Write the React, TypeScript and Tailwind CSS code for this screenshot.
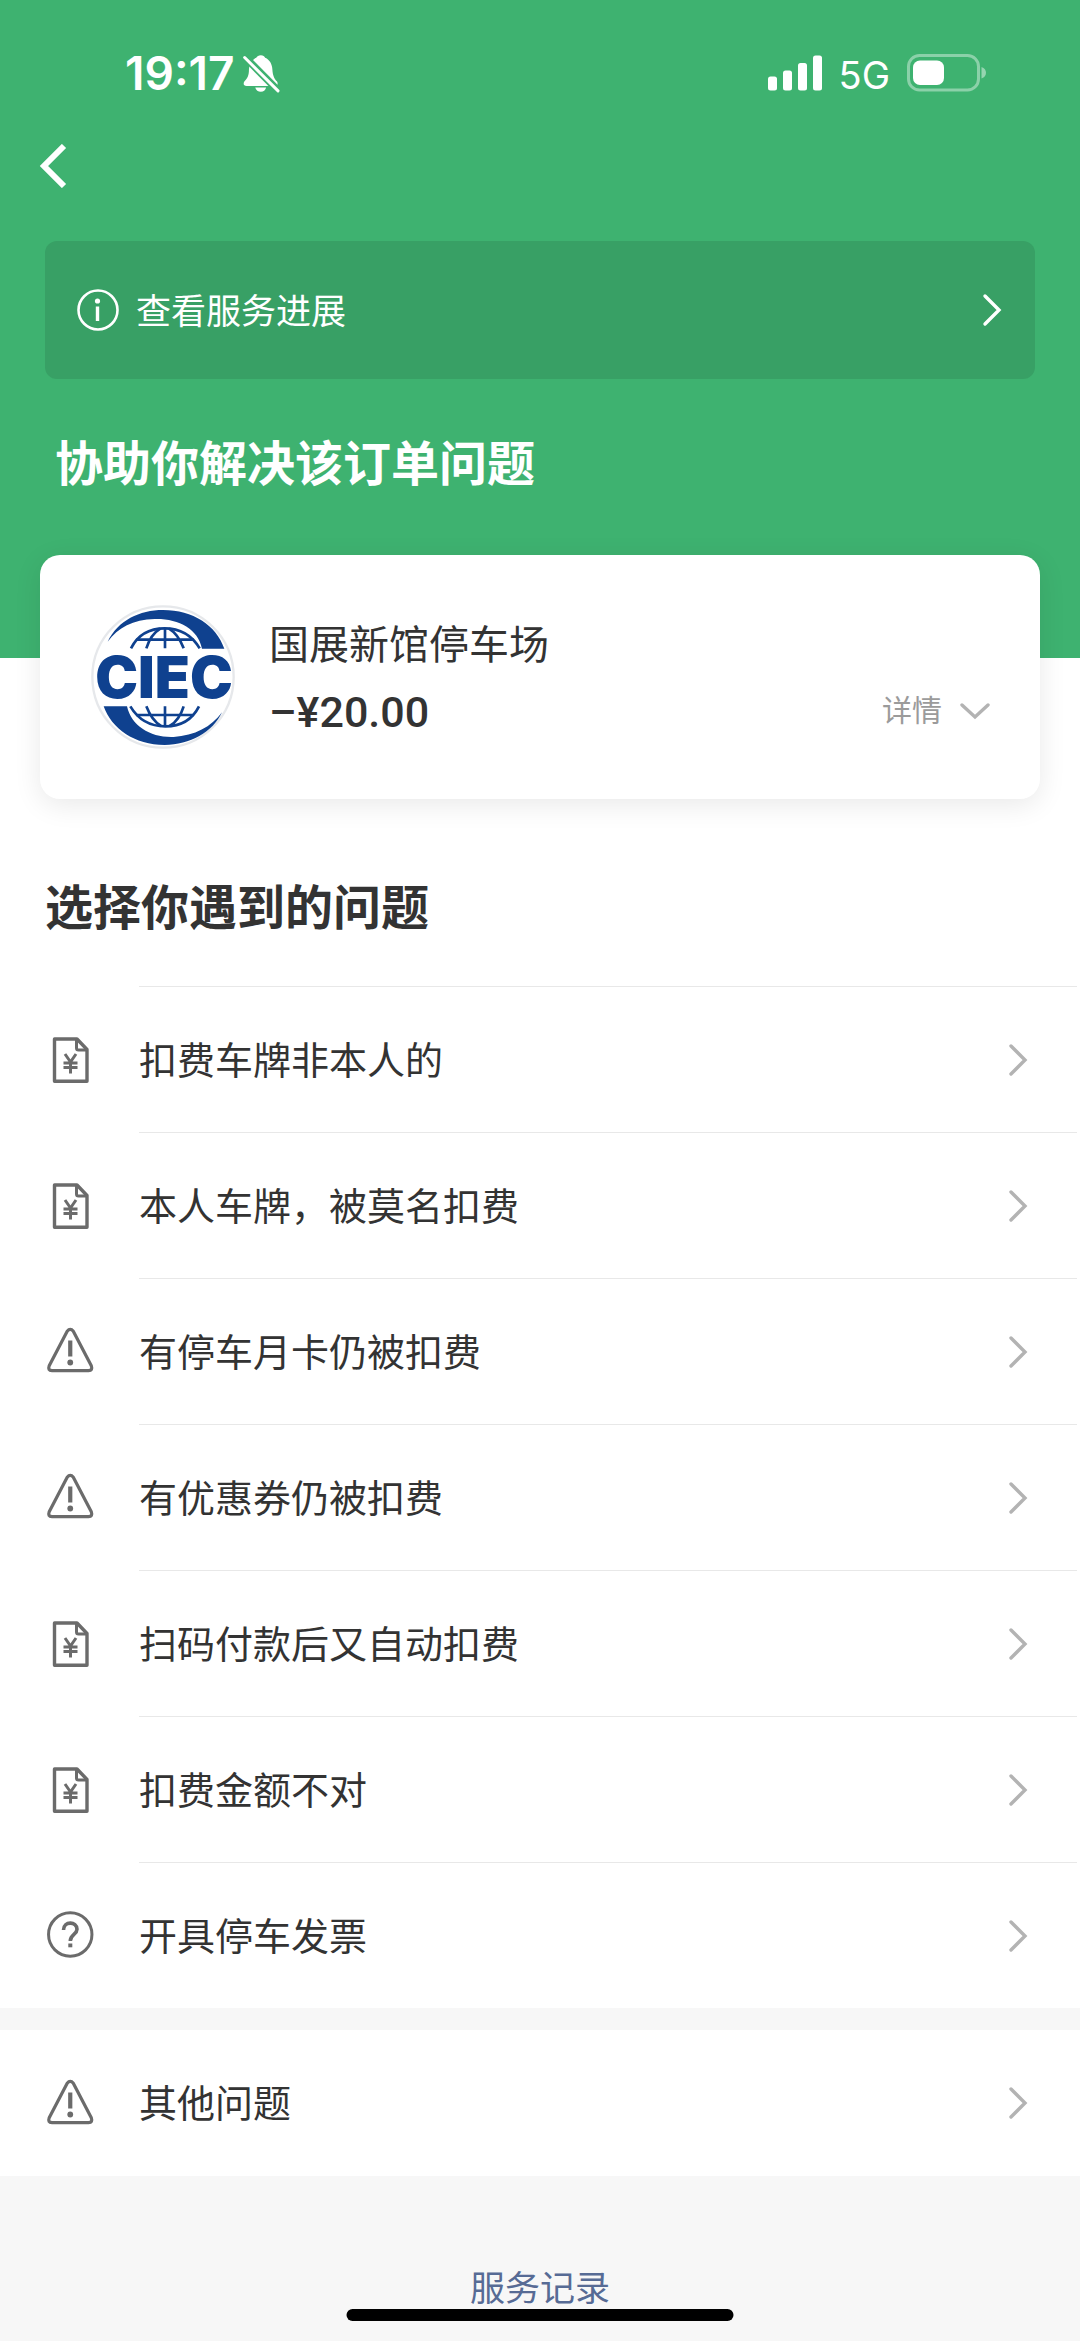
import type { ReactNode } from "react";

type IconName = "bill" | "warning" | "question";

const ISSUES: { label: string; icon: IconName }[] = [
  { label: "扣费车牌非本人的", icon: "bill" },
  { label: "本人车牌，被莫名扣费", icon: "bill" },
  { label: "有停车月卡仍被扣费", icon: "warning" },
  { label: "有优惠券仍被扣费", icon: "warning" },
  { label: "扫码付款后又自动扣费", icon: "bill" },
  { label: "扣费金额不对", icon: "bill" },
  { label: "开具停车发票", icon: "question" },
];

function BillIcon() {
  return (
    <svg viewBox="0 0 48 48" className="size-12" fill="none" stroke="#6b6b6b" strokeWidth="3.4" strokeLinejoin="round">
      <path d="M8.500 4h22.500L41 14.500V46.300H8.500z" />
      <path d="M30.500 4.500v8.500q0 2 2 2h8.500" strokeWidth="3" />
      <path d="M19 19l5.500 8 5.500-8M17.500 28h14M17.500 32.500h14M24.500 27V38.500" strokeWidth="3" />
    </svg>
  );
}

function WarningIcon() {
  return (
    <svg viewBox="0 0 48 48" className="size-12" fill="none" stroke="#6b6b6b" strokeWidth="3.200" strokeLinejoin="round">
      <path d="M21.200 4.200L3.200 38.700Q1.500 43.500 6 43.700H42.500Q47 43.500 45.300 38.700L27.300 4.200Q24.250 0.400 21.200 4.200Z" />
      <path d="M24.250 13.500v16" strokeWidth="4.200" />
      <circle cx="24.250" cy="35.500" r="2.900" fill="#6b6b6b" stroke="none" />
    </svg>
  );
}

function QuestionIcon() {
  return (
    <svg viewBox="0 0 48 48" className="size-12" fill="none" stroke="#6b6b6b" strokeWidth="3">
      <circle cx="24.250" cy="23.500" r="21.700" />
      <path d="M17.500 19C17.500 10 31 10 31 18.300C31 23.500 24.300 23.500 24.300 30" strokeWidth="3.600" />
      <rect x="22.300" y="32.500" width="4" height="3.800" fill="#6b6b6b" stroke="none" />
    </svg>
  );
}

const ICONS: Record<IconName, ReactNode> = {
  bill: <BillIcon />,
  warning: <WarningIcon />,
  question: <QuestionIcon />,
};

function ChevronRight({ className }: { className: string }) {
  return (
    <svg viewBox="0 0 20 34" className={`h-[34px] w-5 ${className}`} fill="none" stroke="currentColor" strokeWidth="3.4" strokeLinecap="round">
      <path d="M3 3l14 14L3 31" />
    </svg>
  );
}

function StatusBar() {
  return (
    <div className="flex h-[146px] items-center justify-between pl-[125px] pr-[93px] font-['Inter',sans-serif]">
      <div className="flex items-center gap-2">
        <span className="text-[46px] leading-none font-semibold">19:17</span>
        <svg viewBox="22 24 112 117" className="h-[39px] w-[37px]" fill="currentColor">
          <path d="M76 27c7 0 11 3 13 8 14 6 21 19 22 36 1 17 5 26 14 36 4 8 1 13-7 13H33c-9 0-11-6-7-13 10-11 14-19 14-36 1-17 8-30 22-36 3-5 7-8 14-8z" />
          <path d="M59 125h33c-2 8-8 13-16 13s-15-5-17-13z" />
          <path d="M30 35l97 98" stroke="#3eb270" strokeWidth="22" />
          <path d="M27 34l101 101" stroke="currentColor" strokeWidth="9" strokeLinecap="round" />
        </svg>
      </div>
      <div className="flex items-center gap-[17px]">
        <svg viewBox="0 0 54 36" className="h-9 w-[54px]" fill="currentColor">
          <rect x="0" y="21.500" width="9" height="14" rx="2.500" />
          <rect x="15" y="15.500" width="9" height="20" rx="2.500" />
          <rect x="30" y="8" width="9" height="27.500" rx="2.500" />
          <rect x="45" y="0.500" width="9" height="35" rx="2.500" />
        </svg>
        <span className="pt-1 text-[38px] leading-none">5G</span>
        <svg viewBox="0 0 80 38" className="h-[38px] w-20" fill="none">
          <rect x="1.500" y="1.500" width="70" height="34.500" rx="11" stroke="#fff" strokeOpacity="0.4" strokeWidth="3" />
          <rect x="6" y="6.500" width="31" height="24.500" rx="7" fill="#fff" />
          <path d="M74.500 13c6 2 6 9.500 0 11.500z" fill="#fff" fillOpacity="0.45" />
        </svg>
      </div>
    </div>
  );
}

function Globe() {
  return (
    <g fill="none" stroke="#0f418f" strokeWidth="8">
      <path d="M144 154C165 112 200 94 245 94S325 112 350 154" />
      <path d="M160 128H332M246 94V154M232 95C210 108 198 128 190 154M258 95C280 108 292 128 302 154" />
    </g>
  );
}

function MerchantLogo() {
  return (
    <svg viewBox="24 24 432 432" className="size-36 shrink-0" role="img" aria-label="CIEC">
      <circle cx="240" cy="240" r="212" fill="#fff" stroke="#e6e8eb" strokeWidth="7" />
      <path d="M74 134C105 70 170 39 240 39C330 39 400 85 424 155H357C345 95 285 64 215 66C150 68 105 92 74 134Z" fill="#0f418f" />
      <path d="M417 346C390 405 320 444 245 444C155 444 85 395 62 328H132C145 388 205 423 272 420C335 416 385 390 417 346Z" fill="#0f418f" />
      <Globe />
      <g transform="rotate(180 246 241)">
        <Globe />
      </g>
      <text x="243" y="302" textAnchor="middle" fill="#0f418f" fontSize="172" fontWeight="900" fontFamily="Inter, sans-serif">
        CIEC
      </text>
    </svg>
  );
}

function IssueRow({ label, icon, divided }: { label: string; icon: IconName; divided?: boolean }) {
  return (
    <li>
      <button type="button" className="flex h-[146px] w-full items-stretch bg-white pr-[3px] text-left">
        <span className="flex w-[139px] shrink-0 items-center pl-[46px]">{ICONS[icon]}</span>
        <span className={`flex flex-1 items-center justify-between pr-[49px] ${divided ? "border-t border-[#e8e8e8]" : ""}`}>
          <span className="pb-1 text-[38px] leading-[56px]">{label}</span>
          <ChevronRight className="text-[#b3b3b3]" />
        </span>
      </button>
    </li>
  );
}

export default function App() {
  return (
    <div className="relative flex min-h-screen flex-col bg-[#f7f7f7] font-['Noto_Sans_CJK_SC','Noto_Sans',sans-serif] text-[#333333]">
      <header className="bg-[#3eb270] pb-[162px] text-white">
        <StatusBar />
        <button type="button" aria-label="返回" className="ml-[37px] flex h-10 w-8 items-center">
          <svg viewBox="0 0 32 44" className="h-11 w-8 shrink-0" fill="none" stroke="currentColor" strokeWidth="6">
            <path d="M27 2L7 22l20 20" />
          </svg>
        </button>

        <button type="button" className="mx-[45px] mt-[55px] flex h-[138px] w-[calc(100%-90px)] items-center rounded-xl bg-[#38a065] pr-[33px] pl-8 text-left">
          <svg viewBox="0 0 42 42" className="size-[42px]" fill="none" stroke="currentColor" strokeWidth="2.600">
            <circle cx="21" cy="21" r="19.500" />
            <circle cx="20.500" cy="12" r="2.600" fill="currentColor" stroke="none" />
            <path d="M20.500 17.500v14.500" strokeWidth="3.400" />
          </svg>
          <span className="ml-[17px] flex-1 pb-0.5 text-[35px] leading-[52px]">查看服务进展</span>
          <ChevronRight className="text-white" />
        </button>

        <h1 className="mt-[45px] px-[55px] text-[48px] leading-[72px] font-bold">协助你解决该订单问题</h1>
      </header>

      <main className="bg-white">
        <section className="relative mx-10 -mt-[103px] flex items-center rounded-[20px] bg-white py-[50px] pr-[50px] pl-[51px] shadow-[0_6px_28px_rgba(0,0,0,0.09)]">
          <MerchantLogo />
          <div className="ml-[34px] flex-1">
            <h2 className="text-[40px] leading-[70px]">国展新馆停车场</h2>
            <div className="flex items-center justify-between">
              <span className="font-['Roboto',sans-serif] text-[43px] leading-[70px] font-medium">–¥20.00</span>
              <button type="button" className="flex items-center gap-[18px] pb-2 text-[30px] leading-[60px] text-[#9b9b9b]">
                详情
                <svg viewBox="0 0 30 24" className="h-6 w-[30px]" fill="none" stroke="#b3b3b3" strokeWidth="3.400" strokeLinecap="round">
                  <path d="M2 9l13 12L28 9" />
                </svg>
              </button>
            </div>
          </div>
        </section>

        <h2 className="mt-[69px] px-[45px] text-[48px] leading-[72px] font-bold">选择你遇到的问题</h2>
        <ul className="mt-[46px]">
          {ISSUES.map((issue) => (
            <IssueRow key={issue.label} {...issue} divided />
          ))}
        </ul>
      </main>

      <ul className="mt-[22px]">
        <IssueRow label="其他问题" icon="warning" />
      </ul>

      <footer className="flex flex-1 justify-center pt-[84px]">
        <a href="#records" className="text-[35px] leading-[52px] text-[#576b95]">
          服务记录
        </a>
      </footer>

      {/* home indicator floats over the page */}
      <div className="absolute bottom-5 left-1/2 h-3 w-[387px] -translate-x-1/2 rounded-full bg-black" />
    </div>
  );
}
